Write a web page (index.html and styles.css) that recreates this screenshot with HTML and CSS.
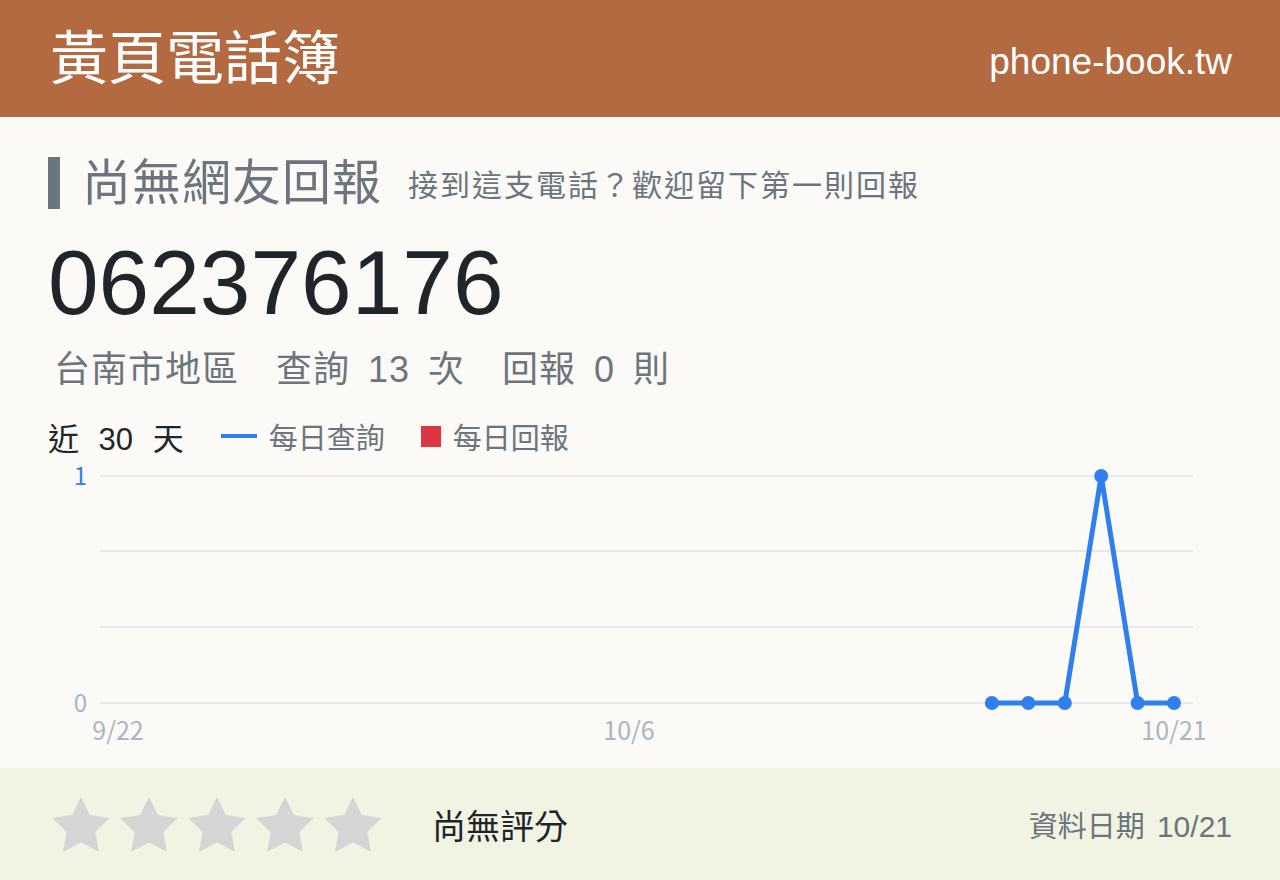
FILE: index.html
```html
<!doctype html>
<html lang="zh-Hant">
	<head>
		<meta charset="UTF-8">
		<title>062376176 - 黃頁電話簿</title>
		<link rel="stylesheet" href="styles.css">
	</head>
	<body>
		<header class="top">
			<div class="brand">黃頁電話簿</div>
			<div class="site">phone-book.tw</div>
		</header>
		<main class="main">
			<div class="headline">
				<span class="bar"></span>
				<h1>尚無網友回報</h1>
				<span class="sub">接到這支電話？歡迎留下第一則回報</span>
			</div>
			<div class="number">062376176</div>
			<div class="meta">台南市地區　查詢 13 次　回報 0 則</div>
			<div class="legend">
				<span class="range">近 30 天</span>
				<span class="key"><i class="swatch line"></i>每日查詢</span>
				<span class="key"><i class="swatch box"></i>每日回報</span>
			</div>
			<svg class="chart" width="1184" height="300" viewBox="0 0 1184 300">
				<g class="grid">
					<line x1="52" y1="26" x2="1145" y2="26"/>
					<line x1="52" y1="101" x2="1145" y2="101"/>
					<line x1="52" y1="177" x2="1145" y2="177"/>
					<line x1="52" y1="253" x2="1145" y2="253"/>
				</g>
				<text class="ytick hot" x="39" y="35">1</text>
				<text class="ytick" x="39" y="262">0</text>
				<text class="xtick" x="70" y="290">9/22</text>
				<text class="xtick" x="581" y="290">10/6</text>
				<text class="xtick" x="1126" y="290">10/21</text>
				<polyline class="series" points="943.9,253 980.3,253 1016.8,253 1053.2,26 1089.6,253 1126,253"/>
				<g class="dots">
					<circle cx="943.9" cy="253" r="7"/>
					<circle cx="980.3" cy="253" r="7"/>
					<circle cx="1016.8" cy="253" r="7"/>
					<circle cx="1053.2" cy="26" r="7"/>
					<circle cx="1089.6" cy="253" r="7"/>
					<circle cx="1126" cy="253" r="7"/>
				</g>
			</svg>
		</main>
		<footer class="foot">
			<div class="stars">
				<svg viewBox="2 2 20 19.1" width="58" height="55"><polygon points="12,2 15.09,8.26 22,9.27 17,14.14 18.18,21.02 12,17.77 5.82,21.02 7,14.14 2,9.27 8.91,8.26"/></svg>
				<svg viewBox="2 2 20 19.1" width="58" height="55"><polygon points="12,2 15.09,8.26 22,9.27 17,14.14 18.18,21.02 12,17.77 5.82,21.02 7,14.14 2,9.27 8.91,8.26"/></svg>
				<svg viewBox="2 2 20 19.1" width="58" height="55"><polygon points="12,2 15.09,8.26 22,9.27 17,14.14 18.18,21.02 12,17.77 5.82,21.02 7,14.14 2,9.27 8.91,8.26"/></svg>
				<svg viewBox="2 2 20 19.1" width="58" height="55"><polygon points="12,2 15.09,8.26 22,9.27 17,14.14 18.18,21.02 12,17.77 5.82,21.02 7,14.14 2,9.27 8.91,8.26"/></svg>
				<svg viewBox="2 2 20 19.1" width="58" height="55"><polygon points="12,2 15.09,8.26 22,9.27 17,14.14 18.18,21.02 12,17.77 5.82,21.02 7,14.14 2,9.27 8.91,8.26"/></svg>
			</div>
			<div class="score">尚無評分</div>
			<div class="date">資料日期 <span>10/21</span></div>
		</footer>
	</body>
</html>
```

FILE: styles.css
```css
*{margin:0;padding:0;box-sizing:border-box;}
body{
	background:#fbfaf6;
	font-family:"Liberation Sans","Noto Sans CJK TC",sans-serif;
	color:#212529;
	width:1280px;height:880px;
	overflow:hidden;
}
.top{
	height:117px;
	padding:0 48px 0 50px;
	background:#b46a41;
	color:#fff;
	display:flex;
	align-items:center;
	justify-content:space-between;
}
.brand{font-size:58px;line-height:1;}
.site{font-size:37px;line-height:1;margin-top:6px;}

.main{padding:40px 48px 0;height:651px;}
.headline{
	height:52px;
	display:flex;
	align-items:center;
	color:#6c757d;
}
.headline .bar{
	width:12px;height:52px;
	background:#6c757d;
	margin-right:22px;
}
.headline h1{
	font-size:49px;
	font-weight:normal;
	line-height:52px;
	letter-spacing:1px;
	margin-right:26px;
}
.headline .sub{
	font-size:30px;
	line-height:52px;
	letter-spacing:2px;
	margin-top:6px;
}

.number{
	font-size:91px;
	line-height:92px;
	margin-top:28px;
}
.meta{
	margin-top:23px;
	font-size:36px;
	line-height:36px;
	color:#6c757d;
	letter-spacing:1px;
	word-spacing:7px;
	padding-left:6px;
}
.legend{
	margin-top:30px;
	height:36px;
	display:flex;
	align-items:center;
	font-size:29px;
	color:#6c757d;
}
.legend .range{
	font-size:31px;
	color:#212529;
	word-spacing:11px;
	margin-right:37px;
}
.legend .key{display:flex;align-items:center;margin-right:36px;}
.swatch{display:inline-block;margin-right:12px;}
.swatch.line{width:36px;height:4px;background:#2f80ed;}
.swatch.box{width:20px;height:21px;background:#dc3545;}

.chart{display:block;margin-top:-4px;overflow:visible;}
.chart text{font-family:"Noto Sans CJK TC",sans-serif;font-size:25px;fill:#adb5bd;}
.chart .ytick{text-anchor:end;font-size:24px;}
.chart .ytick.hot{fill:#2f80ed;}
.chart .xtick{text-anchor:middle;}
.grid line{stroke:#e6e8ec;stroke-width:2;}
.series{fill:none;stroke:#2f80ed;stroke-width:5;stroke-linejoin:round;}
.dots circle{fill:#2f80ed;}

.foot{
	height:112px;
	background:#f1f4e2;
	padding:0 48px 0 52px;
	display:flex;
	align-items:center;
}
.stars{display:flex;gap:10px;}
.stars svg{display:block;}
.stars polygon{fill:#d5d5d5;}
.score{font-size:34px;margin-left:50px;}
.date{
	margin-left:auto;
	font-size:29px;
	color:#6c757d;
}
.date span{margin-left:4px;font-size:30px;}
```
